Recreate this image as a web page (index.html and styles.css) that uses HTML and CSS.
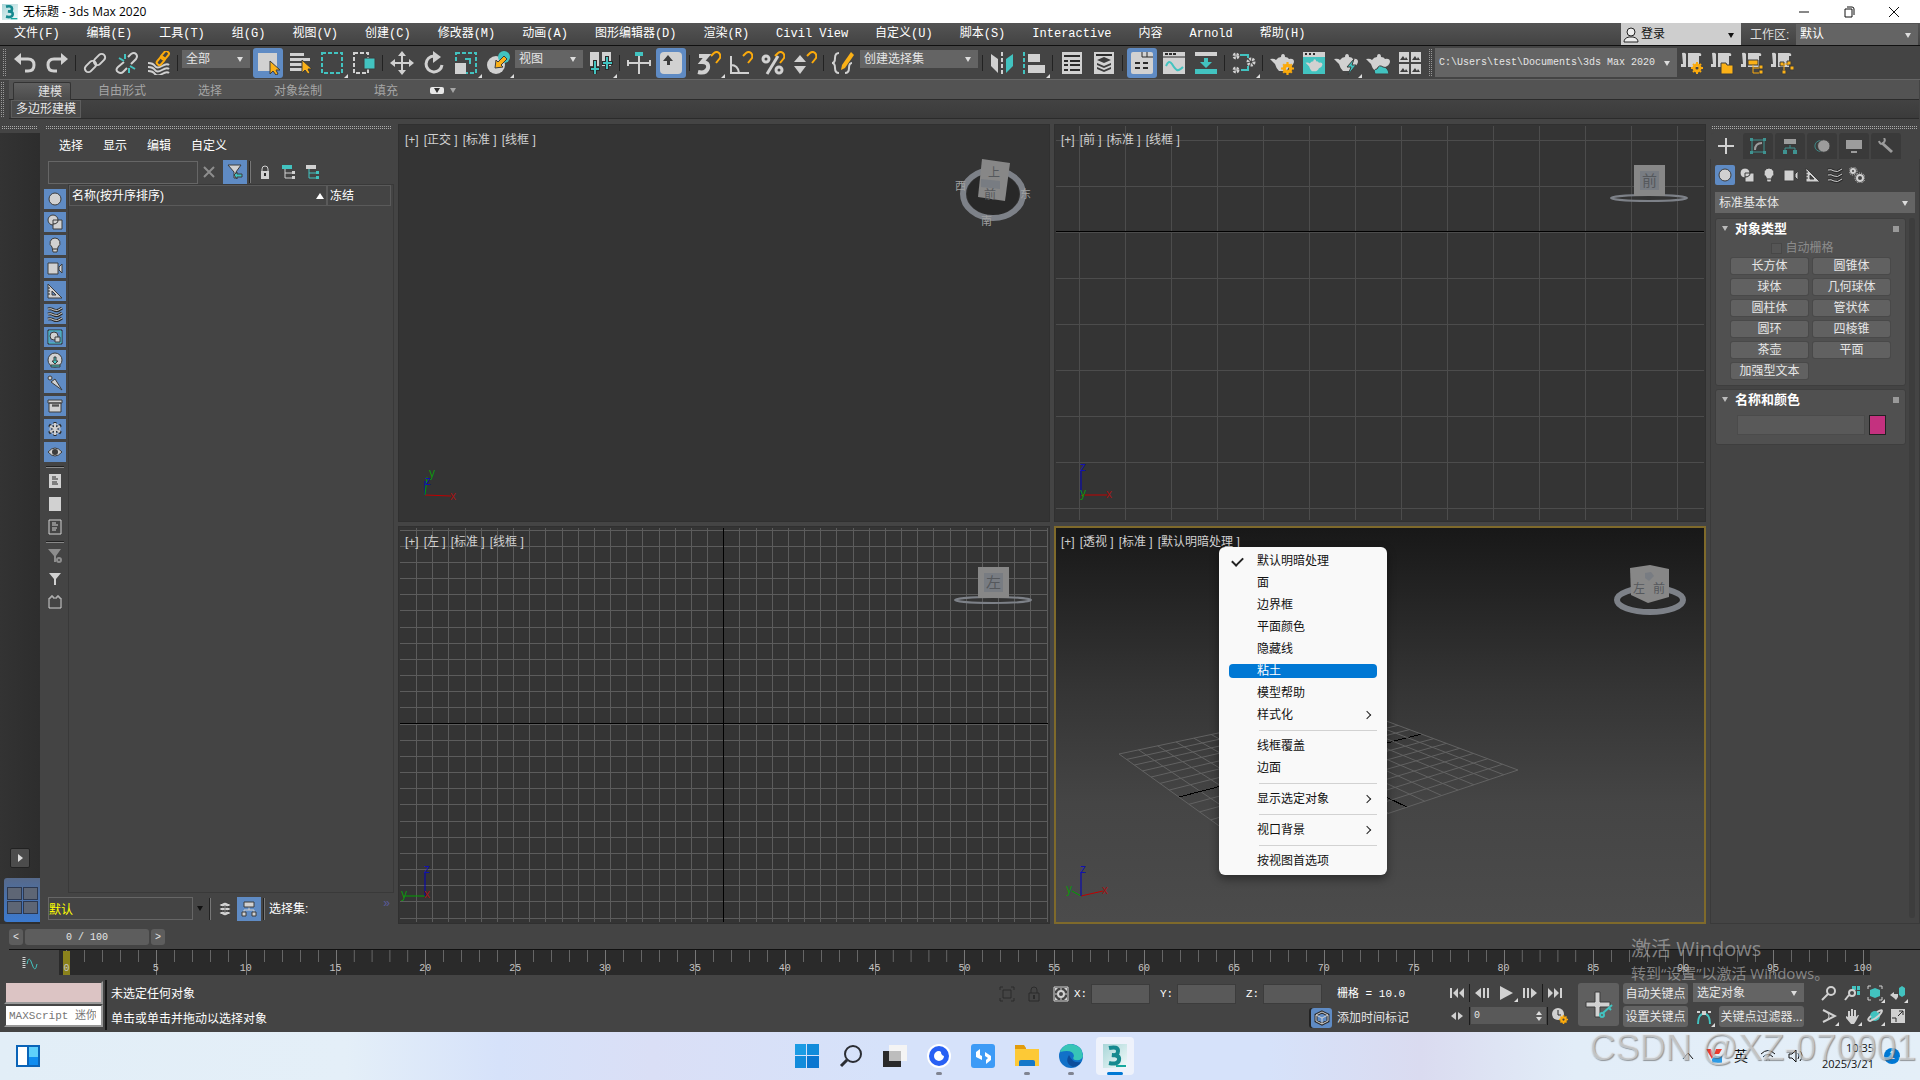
FILE: index.html
```html
<!DOCTYPE html>
<html lang="zh-CN">

<head>
    <meta charset="UTF-8">
    <meta name="viewport" content="width=device-width, initial-scale=1.0">
    <title>无标题 - 3ds Max 2020</title>
    <link rel="stylesheet" href="styles.css">
</head>

<body>
    <!-- icon sprite: g = grey, t = teal, o = orange, d = dark -->
    <svg class="sprite" aria-hidden="true">
        <symbol id="undo" viewBox="0 0 24 24"><path class="lg w3" d="M7 8h8q6 0 6 6t-6 6h-3"/><path class="g" d="M8 2v12L1 8z"/></symbol>
        <symbol id="redo" viewBox="0 0 24 24"><path class="lg w3" d="M17 8H9q-6 0-6 6t6 6h3"/><path class="g" d="M16 2v12l7-6z"/></symbol>
        <symbol id="link" viewBox="0 0 24 24"><g class="lg w2"><rect x="1" y="12" width="13" height="7" rx="3.5" transform="rotate(-45 7.500 15.500)"/><rect x="10" y="5" width="13" height="7" rx="3.500" transform="rotate(-45 16.500 8.500)"/></g></symbol>
        <symbol id="unlink" viewBox="0 0 24 24"><path class="lg w2" d="M9 11l-6 5q-3 3 0 5t5 0l4-4M13 6l3-3q3-2 5 0t0 5l-5 5"/><path class="lt w2" d="M4 7l5 3M10 3v5M20 18l-5-3M14 22v-5"/></symbol>
        <symbol id="bind" viewBox="0 0 24 24"><path class="lg w2" d="M1 12q5 0 7 3t7 0 7-1M1 16q5 0 7 3t7 0 7-1M1 20q5 0 7 3t7 0 7-1"/><g class="lo w2"><rect x="9" y="8" width="9" height="5" rx="2" transform="rotate(-50 13 10)"/><rect x="14" y="2" width="9" height="5" rx="2" transform="rotate(-50 18 5)"/></g></symbol>
        <symbol id="select" viewBox="0 0 24 24"><path class="g" d="M2 2h19v18H2z"/><path class="o s" d="M14 10v13l3-3 3 4 2-1-2-4h4z"/></symbol>
        <symbol id="byname" viewBox="0 0 24 24"><path class="g" d="M2 2h14v3H2zM2 7h20v3H2zM2 12h12v3H2zM2 17h12v3H2z"/><path class="o s" d="M14 9v13l3-3 3 4 2-1-2-4h4z"/></symbol>
        <symbol id="rect" viewBox="0 0 24 24"><path class="lt w2 dash" d="M2 2h20v20H2z"/></symbol>
        <symbol id="window" viewBox="0 0 24 24"><path class="lg w2 dash" d="M2 2h14v20H2z"/><path class="t s" d="M12 7h11v11H12z"/></symbol>
        <symbol id="move" viewBox="0 0 24 24"><path class="g" d="M12 0l4 5h-3v6h6V8l5 4-5 4v-3h-6v6h3l-4 5-4-5h3v-6H5v3l-5-4 5-4v3h6V5H8z"/></symbol>
        <symbol id="rotate" viewBox="0 0 24 24"><path class="lg w3" d="M12 5a8 8 0 1 0 8 9"/><path class="g" d="M11 0l8 6-8 6z"/></symbol>
        <symbol id="scale" viewBox="0 0 24 24"><path class="lt w2 dash" d="M2 2h20v20H2z"/><path class="g" d="M1 12h11v11H1z"/><path class="lt w2" d="M11 8h5v5"/></symbol>
        <symbol id="place" viewBox="0 0 24 24"><circle class="g" cx="10" cy="14" r="9"/><circle class="t" cx="18" cy="6" r="6"/><path class="o s" d="M18 5l3 3-6 6 2 2-8 1 1-8 2 2z"/></symbol>
        <symbol id="pivot" viewBox="0 0 24 24"><path class="g" d="M1 1h9v14H1zM13 1h9v14h-9z"/><path class="ld w4" d="M6 9v14M1 18h10M18 5v14M13 12h11"/><path class="lt w2" d="M6 10v13M2 18h8M18 6v12M14 12h9"/></symbol>
        <symbol id="manip" viewBox="0 0 24 24"><path class="lg w2" d="M1 12h22M12 1v22M1 9v6M23 9v6"/><path class="t" d="M8 1h8v4H8z"/></symbol>
        <symbol id="keymode" viewBox="0 0 24 24"><rect class="g" x="1" y="1" width="22" height="22" rx="4"/><path class="d" d="M9 4l5 6h-3v4H8v-4H4z"/></symbol>
        <symbol id="magnet" viewBox="0 0 24 24"><path class="lo w2" d="M14 5l3-3q3-2 5 0t1 5l-4 5"/></symbol>
        <symbol id="snap" viewBox="0 0 24 24"><path class="lg w4" d="M2 5h8l-5 6q7 0 6 6-2 6-10 4"/><use href="#magnet"/></symbol>
        <symbol id="angle" viewBox="0 0 24 24"><path class="lg w2" d="M2 5v17h18M2 14q7 0 8 8"/><use href="#magnet"/></symbol>
        <symbol id="percent" viewBox="0 0 24 24"><g class="lg w3"><circle cx="5" cy="8" r="3"/><circle cx="18" cy="19" r="3"/><path d="M17 5L6 23"/></g><use href="#magnet"/></symbol>
        <symbol id="spin" viewBox="0 0 24 24"><path class="g" d="M1 11h12L7 4zM1 15h12l-6 8z"/><use href="#magnet"/></symbol>
        <symbol id="braces" viewBox="0 0 24 24"><path class="lg w2" d="M8 2Q4 2 4 7t-3 5q3 0 3 5t4 5M14 22q4 0 4-5t3-5"/><path class="o" d="M20 1l3 3-9 13-4 2 1-5z"/></symbol>
        <symbol id="mirror" viewBox="0 0 24 24"><path class="g" d="M1 3l7 5v14l-7-7z"/><path class="lg w2 dash" d="M12 1v22"/><path class="t" d="M23 3l-7 5v14l7-7z"/></symbol>
        <symbol id="align" viewBox="0 0 24 24"><path class="lt w2 dash" d="M2 1v22"/><path class="g" d="M6 3h12v8H6zM6 14h17v8H6z"/></symbol>
        <symbol id="sheet" viewBox="0 0 24 24"><path class="g" d="M2 1h20v22H2z"/><path class="ld w2" d="M4 5h16M4 10h4M10 10h10M4 14h4M10 14h10M4 19h4M10 19h10"/></symbol>
        <symbol id="layersheet" viewBox="0 0 24 24"><path class="g" d="M2 1h20v22H2z"/><path class="ld w2" d="M4 4h16"/><path class="d" d="M12 6l7 3-7 3-7-3zM5 12l7 3 7-3v2l-7 3-7-3zM5 16l7 3 7-3v2l-7 3-7-3z"/></symbol>
        <symbol id="ribbon" viewBox="0 0 24 24"><rect class="g" x="1" y="1" width="22" height="22" rx="2"/><path class="ld w1" d="M12 1v5h11M17 1v5"/><path class="ld w2" d="M5 12h5M13 12h5M5 17h5M13 17h5"/></symbol>
        <symbol id="curve" viewBox="0 0 24 24"><path class="g" d="M1 1h22v22H1z"/><path class="ld w1" d="M1 6h22"/><path class="ld w2" d="M3 3h3M7 3h3M11 3h3"/><path class="lt w2" d="M4 15q3-7 6-2t5 6 6-3"/></symbol>
        <symbol id="schem" viewBox="0 0 24 24"><path class="g" d="M1 1h22v4H1z"/><path class="t" d="M1 18h22v5H1zM10 7h4v4h4l-6 6-6-6h4z"/></symbol>
        <symbol id="mat" viewBox="0 0 24 24"><path class="lt w2" d="M8 4h8v3M9 19h7v-4"/><g class="lg w3 dash2"><circle cx="4" cy="5" r="2"/><circle cx="4" cy="19" r="2"/><circle cx="19" cy="11" r="3"/></g></symbol>
        <symbol id="pot" viewBox="0 0 24 24"><path class="g" d="M0 8q4-1 6 1 2-3 5-3 0-3 2-3t2 3q3 0 4 2 5-1 5 3-1 4-5 5-1 3-4 4H9q-3-3-4-7z"/></symbol>
        <symbol id="gear" viewBox="0 0 12 12"><circle class="lo w3" cx="6" cy="6" r="3"/><path class="lo w2" d="M6 0v2M6 10v2M0 6h2M10 6h2M2 2l1 1M9 9l1 1M10 2L9 3M2 10l1-1"/></symbol>
        <symbol id="rsetup" viewBox="0 0 24 24"><use href="#pot"/><use href="#gear" x="11" y="11" width="13" height="13"/></symbol>
        <symbol id="rframe" viewBox="0 0 24 24"><path class="g" d="M1 1h22v5H1z"/><path class="t" d="M1 6h22v17H1z"/><path class="ld w2" d="M3 3h2M7 3h2M11 3h2"/><use href="#pot" x="3" y="6" width="18" height="17"/></symbol>
        <symbol id="rbolt" viewBox="0 0 24 24"><use href="#pot"/><path class="t s" d="M20 8l-7 8h4l-3 8 8-10h-4z"/></symbol>
        <symbol id="rcloud" viewBox="0 0 24 24"><use href="#pot"/><path class="t s" d="M9 23q-2-5 2-5 2-5 6-2 5 0 6 7z"/></symbol>
        <symbol id="gallery" viewBox="0 0 24 24"><path class="g" d="M1 1h10v10H1zM13 1h10v10H13zM1 13h10v10H1zM13 13h10v10H13z"/><path class="d" d="M2 9l3-4 2 3 1-2 2 3zM14 9l3-4 2 3 1-2 2 3zM2 21l3-4 2 3 1-2 2 3zM14 21l3-4 2 3 1-2 2 3z"/></symbol>
        <symbol id="scroll" viewBox="0 0 24 24"><path class="g" d="M2 2q3-1 4 1v13H1v-3h2zM8 2h11q3 0 2 3h-2v11H8z"/></symbol>
        <symbol id="sc1" viewBox="0 0 24 24"><use href="#scroll"/><use href="#gear" x="11" y="11" width="12" height="12"/></symbol>
        <symbol id="sc2" viewBox="0 0 24 24"><use href="#scroll"/><path class="o s" d="M11 12h5l1 2h6v9H11z"/></symbol>
        <symbol id="sc3" viewBox="0 0 24 24"><use href="#scroll"/><path class="o s" d="M8 9h10v5H8zM19 14h4v4h-4zM19 19h4v4h-4z"/><path class="lo w1" d="M13 14v8h6M13 17h6"/></symbol>
        <symbol id="sc4" viewBox="0 0 24 24"><use href="#scroll"/><path class="o s" d="M10 11h4v4h-4zM17 10h4v4h-4zM12 19h4v4h-4zM20 15h4v4h-4z"/><path class="lo w1" d="M14 19v-6h5"/></symbol>
        <symbol id="sphere" viewBox="0 0 16 16"><circle class="g s" cx="8" cy="8" r="6"/></symbol>
        <symbol id="shapes" viewBox="0 0 16 16"><circle class="g s" cx="6" cy="6" r="5"/><path class="g s" d="M6 6h9v9H6z"/><path class="ld w1" d="M6 10q5 0 5-4"/></symbol>
        <symbol id="bulb" viewBox="0 0 16 16"><path class="g s" d="M8 1a5 5 0 0 1 3 9l-1 5H6l-1-5a5 5 0 0 1 3-9z"/><path class="ld w1" d="M6 12h4"/></symbol>
        <symbol id="camera" viewBox="0 0 16 16"><path class="g s" d="M1 3h10v11H1zM12 7l3-3v9l-3-3z"/></symbol>
        <symbol id="ruler" viewBox="0 0 16 16"><path class="g s" fill-rule="evenodd" d="M1 1l14 14H1zM5 8v4h4z"/><path class="ld w1" d="M1 5h2M1 8h2M1 11h2"/></symbol>
        <symbol id="waves" viewBox="0 0 16 16"><path class="ld w3" d="M1 3q3-1 6 1t8-2M1 8q3-1 6 1t8-2M1 13q3-1 6 1t8-2"/><path class="lg w1" d="M1 3q3-1 6 1t8-2M1 8q3-1 6 1t8-2M1 13q3-1 6 1t8-2"/></symbol>
        <symbol id="group" viewBox="0 0 16 16"><path class="ld w1" d="M1 1h14v14H1z"/><path class="lt w1" d="M2 2h12v12H2z"/><circle class="g s" cx="7" cy="7" r="4"/><path class="g s" d="M8 8h5v5H8z"/></symbol>
        <symbol id="xref" viewBox="0 0 16 16"><circle class="g s" cx="8" cy="8" r="7"/><path class="t s" d="M7 5h2v4h2l-3 3-3-3h2zM4 13h9v2H4z"/></symbol>
        <symbol id="bone" viewBox="0 0 16 16"><circle class="g s" cx="3" cy="3" r="2"/><path class="g s" d="M4 7l4-3 7 11z"/></symbol>
        <symbol id="box" viewBox="0 0 16 16"><path class="g s" d="M2 5h12v9H2zM1 2h14v3H1z"/><path class="ld w1" d="M5 7h7M5 8h7"/></symbol>
        <symbol id="snow" viewBox="0 0 16 16"><path class="ld w3" d="M8 1v14M2 4l12 8M14 4L2 12"/><path class="lg w2" d="M8 2v12M3 5l10 6M13 5L3 11"/><circle class="lg w1" cx="8" cy="8" r="5"/></symbol>
        <symbol id="eye" viewBox="0 0 16 16"><path class="g s" d="M1 8q7-8 14 0-7 8-14 0z"/><circle class="d" cx="8" cy="8" r="3"/></symbol>
        <symbol id="doc" viewBox="0 0 16 16"><path class="g" d="M2 1h12v14H2z"/><path class="ld w1" d="M5 4h4M5 6h6M5 9h5M5 11h6"/></symbol>
        <symbol id="blank" viewBox="0 0 16 16"><path class="g" d="M2 1h12v14H2z"/></symbol>
        <symbol id="docline" viewBox="0 0 16 16"><path class="lg w1" d="M2 1h12v14H2zM5 4h4M5 6h6M5 9h5M5 11h4"/></symbol>
        <symbol id="funnel" viewBox="0 0 16 16"><path class="g" d="M2 2h12l-5 6v6H7V8z"/></symbol>
        <symbol id="funnelgear" viewBox="0 0 16 16"><path class="m" d="M1 1h13L9 8v6H7V8z"/><circle class="lm w2" cx="12" cy="12" r="2"/></symbol>
        <symbol id="puzzle" viewBox="0 0 16 16"><path class="lg w1" d="M2 4h2V2h2v2h4V2h2v2h2v10H2z"/></symbol>
        <symbol id="filter" viewBox="0 0 16 16"><path class="g s" d="M1 1h13L9 8v6H7V8z"/><path class="t s" d="M7 11l3-3v2h5v3h-5v2z"/></symbol>
        <symbol id="lock" viewBox="0 0 16 16"><path class="lg w1" d="M5 8V5q0-3 3-3t3 3v3"/><path class="g" d="M4 7h8v8H4z"/><path class="ld w2" d="M8 9v3"/></symbol>
        <symbol id="tree1" viewBox="0 0 16 16"><path class="t" d="M1 1h10v4H1z"/><path class="lg w1" d="M4 5v9h7M4 9h7"/><path class="g" d="M11 7h3v3h-3zM11 12h3v3h-3z"/></symbol>
        <symbol id="tree2" viewBox="0 0 16 16"><path class="g" d="M1 1h10v4H1z"/><path class="lt w1" d="M4 5v9h7M4 9h7"/><path class="t" d="M11 7h3v3h-3zM11 12h3v3h-3z"/></symbol>
        <symbol id="layers" viewBox="0 0 16 16"><path class="g s" d="M8 9l7 3-7 3-7-3zM8 5l7 3-7 3-7-3zM8 1l7 3-7 3-7-3z"/></symbol>
        <symbol id="hier" viewBox="0 0 16 16"><path class="lg w1" d="M8 6v3M3 12V9h10v3"/><path class="g s" d="M3 1h10v5H3zM1 11h4v4H1zM11 11h4v4h-4z"/></symbol>
        <symbol id="gears" viewBox="0 0 16 16"><g class="lg w2"><circle cx="4" cy="4" r="2"/><circle cx="11" cy="11" r="3"/></g><circle class="lg w1 dash1" cx="4" cy="4" r="4"/><circle class="lg w1 dash1" cx="11" cy="11" r="5"/></symbol>
        <symbol id="plus" viewBox="0 0 16 16"><path class="lg w2" d="M8 0v16M0 8h16"/></symbol>
        <symbol id="modify" viewBox="0 0 16 16"><path class="lt w1" d="M2 2h12v12H2z"/><path class="t" d="M0 0h3v3H0zM13 0h3v3h-3zM0 13h3v3H0zM13 13h3v3h-3z"/><path class="lg w2" d="M5 12q0-7 7-7"/></symbol>
        <symbol id="hier2" viewBox="0 0 16 16"><path class="g" d="M2 1h12v5H2z"/><path class="lt w1" d="M8 7v3M3 13v-3h10v3"/><path class="t" d="M1 12h4v4H1zM11 12h4v4h-4z"/></symbol>
        <symbol id="motion" viewBox="0 0 18 16"><circle class="lt w1" cx="7" cy="8" r="6"/><circle class="g s" cx="11" cy="8" r="7"/></symbol>
        <symbol id="display" viewBox="0 0 16 16"><path class="g" d="M0 2h16v9H0zM5 13h6v2H5z"/></symbol>
        <symbol id="wrench" viewBox="0 0 16 16"><path class="lg w3" d="M4 5l10 9"/><path class="lg w2" d="M1 3q1 4 4 2t1-5"/></symbol>
        <symbol id="tcurve" viewBox="0 0 16 14"><path class="lg w3 dash1" d="M2 1v12"/><path class="lt w1" d="M5 8q2-10 5 0t5 0"/></symbol>
        <symbol id="isolate" viewBox="0 0 16 16"><path class="ld w1" d="M4 4h8v8H4zM1 4V1h3M12 1h3v3M15 12v3h-3M4 15H1v-3"/></symbol>
        <symbol id="darklock" viewBox="0 0 16 16"><path class="ld w1" d="M5 7V4q0-3 3-3t3 3v3M3 7h10v8H3z"/><path class="ld w2" d="M8 9v4"/></symbol>
        <symbol id="abs" viewBox="0 0 16 16"><path class="lg w1" d="M1 1h14v14H1z"/><circle class="lg w2" cx="8" cy="8" r="3"/><path class="lg w1" d="M8 2v3M8 11v3M2 8h3M11 8h3"/><path class="g" d="M2 2h3L2 5zM14 2v3l-3-3zM2 14v-3l3 3zM14 14h-3l3-3z"/></symbol>
        <symbol id="cube" viewBox="0 0 16 16"><path class="ld w3" d="M8 2l6 3v6l-6 3-6-3V5z"/><path class="lg w1" d="M8 2l6 3v6l-6 3-6-3V5zM2 5l6 3 6-3M8 8v6"/></symbol>
        <symbol id="first" viewBox="0 0 16 12"><path class="g" d="M1 1h2v10H1zM9 1v10L4 6zM15 1v10l-5-5z"/></symbol>
        <symbol id="prev" viewBox="0 0 16 12"><path class="g" d="M7 1v10L1 6zM9 1h2v10H9zM13 1h2v10h-2z"/></symbol>
        <symbol id="play" viewBox="0 0 16 16"><path class="g" d="M2 1v14l13-7z"/></symbol>
        <symbol id="next" viewBox="0 0 16 12"><path class="g" d="M9 1v10l6-5zM1 1h2v10H1zM5 1h2v10H5z"/></symbol>
        <symbol id="last" viewBox="0 0 16 12"><path class="g" d="M13 1h2v10h-2zM1 1v10l5-5zM7 1v10l5-5z"/></symbol>
        <symbol id="keystep" viewBox="0 0 12 10"><path class="g" d="M5 1v8L0 5zM7 1v8l5-4z"/></symbol>
        <symbol id="clock" viewBox="0 0 16 16"><circle class="g" cx="6" cy="6" r="6"/><path class="ld w1" d="M6 2v5h3"/><use href="#gear" x="7" y="7" width="9" height="9"/></symbol>
        <symbol id="bigkey" viewBox="0 0 28 28"><path class="g s" d="M10 1h5v10h10v5H15v10h-5V16H1v-5h9z"/><path class="lt w2" d="M18 22l9-8M24 17l2 2"/><circle class="lt w2" cx="17" cy="24" r="2"/></symbol>
        <symbol id="tangent" viewBox="0 0 16 16"><path class="lt w2" d="M2 15q0-8 4-10M14 15q0-8-4-10"/><path class="g" d="M1 2h3v2H1zM12 2h3v2h-3zM6 2h4v4H6z"/></symbol>
        <symbol id="zoom" viewBox="0 0 16 16"><circle class="lg w2" cx="10" cy="6" r="4"/><path class="lg w2" d="M7 9l-6 6"/></symbol>
        <symbol id="zoomall" viewBox="0 0 16 16"><path class="t" d="M8 1h4v4H8zM13 1h3v4h-3zM13 6h3v4h-3z"/><circle class="lg w2" cx="8" cy="8" r="3"/><path class="lg w2" d="M5 10l-4 5"/></symbol>
        <symbol id="extent" viewBox="0 0 16 16"><path class="lg w1" d="M1 4V1h3M12 1h3v3M15 12v3h-3M4 15H1v-3"/><path class="t" d="M8 3l5 2v6l-5 2-5-2V5z"/></symbol>
        <symbol id="extentall" viewBox="0 0 16 16"><path class="t" d="M9 3l3-2 3 2v7l-3 2-3-2z"/><path class="g" d="M0 10l4-3v2h4v3l-2 3-2-2z"/></symbol>
        <symbol id="fov" viewBox="0 0 16 16"><path class="lg w2" d="M2 2l12 6-12 6"/><path class="lg w1" d="M6 4q4 4 0 8"/></symbol>
        <symbol id="hand" viewBox="0 0 16 16"><path class="g" d="M4 3h2v5h1V1h2v7h1V2h2v7l2-2h1l-3 6-2 3H7L2 10V8l2 1z"/></symbol>
        <symbol id="orbit" viewBox="0 0 16 16"><circle class="t" cx="8" cy="8" r="5"/><path class="lg w2" d="M10 4q7-4 4 1T3 13Q-1 12 4 8"/></symbol>
        <symbol id="maximize" viewBox="0 0 16 16"><path class="g" d="M1 1h14v14H1z"/><path class="ld w1" d="M2 10h4v4M8 8l5-5M9 3h4v4"/></symbol>
        <symbol id="max" viewBox="0 0 24 24"><defs><linearGradient id="maxg" x2="1" y2="1"><stop stop-color="#a9d6d8"/><stop offset="1" stop-color="#f2fafa"/></linearGradient></defs><path fill="url(#maxg)" d="M0 0h24v24H0z"/><path fill="none" stroke="#16898f" stroke-width="4" d="M6 4q9-2 9 3t-6 4q8 0 7 5t-10 3"/><path fill="#16a79f" d="M13 21h10v2H13z"/></symbol>
    </svg>

    <header class="title">
        <svg class="i16"><use href="#max"/></svg>
        <span>无标题 - 3ds Max 2020</span>
        <div class="winbtns">
            <button aria-label="最小化"><svg viewBox="0 0 12 12"><path d="M1 6h10"/></svg></button>
            <button aria-label="还原"><svg viewBox="0 0 12 12"><path d="M2 3h7v8H2zM4 1h5q2 0 2 2v6"/></svg></button>
            <button aria-label="关闭"><svg viewBox="0 0 12 12"><path d="M1 1l10 10M11 1L1 11"/></svg></button>
        </div>
    </header>

    <nav class="menubar">
        <button>文件(F)</button><button>编辑(E)</button><button>工具(T)</button><button>组(G)</button><button>视图(V)</button><button>创建(C)</button><button>修改器(M)</button><button>动画(A)</button><button>图形编辑器(D)</button><button>渲染(R)</button><button>Civil View</button><button>自定义(U)</button><button>脚本(S)</button><button>Interactive</button><button>内容</button><button>Arnold</button><button>帮助(H)</button>
        <button class="login"><svg class="i16" viewBox="0 0 16 16"><circle cx="8" cy="5" r="4"/><path d="M1 15q0-4 5-5h4q5 1 5 5z"/></svg>登录<i class="tri"></i></button>
        <label for="ws">工作区:</label>
        <span class="drop ws"><select id="ws"><option>默认</option></select></span>
    </nav>

    <div class="toolbar">
        <i class="grip"></i>
        <button><svg><use href="#undo"/></svg></button><button><svg><use href="#redo"/></svg></button><hr>
        <button><svg><use href="#link"/></svg></button><button><svg><use href="#unlink"/></svg></button><button><svg><use href="#bind"/></svg></button><hr>
        <span class="drop short"><select aria-label="选择过滤器"><option>全部</option></select></span>
        <button class="on"><svg><use href="#select"/></svg></button><button><svg><use href="#byname"/></svg></button><button class="more"><svg><use href="#rect"/></svg></button><button><svg><use href="#window"/></svg></button><hr>
        <button><svg><use href="#move"/></svg></button><button><svg><use href="#rotate"/></svg></button><button class="more"><svg><use href="#scale"/></svg></button><button class="more"><svg><use href="#place"/></svg></button>
        <span class="drop short"><select aria-label="参考坐标系"><option>视图</option></select></span>
        <button class="more"><svg><use href="#pivot"/></svg></button><hr>
        <button><svg><use href="#manip"/></svg></button><button class="on"><svg><use href="#keymode"/></svg></button><hr>
        <button class="more"><svg><use href="#snap"/></svg></button><button><svg><use href="#angle"/></svg></button><button><svg><use href="#percent"/></svg></button><button><svg><use href="#spin"/></svg></button><hr>
        <button><svg><use href="#braces"/></svg></button>
        <span class="drop sets"><select aria-label="命名选择集"><option>创建选择集</option></select></span><hr>
        <button><svg><use href="#mirror"/></svg></button><button class="more"><svg><use href="#align"/></svg></button><hr>
        <button><svg><use href="#sheet"/></svg></button><button><svg><use href="#layersheet"/></svg></button><hr>
        <button class="on"><svg><use href="#ribbon"/></svg></button><button><svg><use href="#curve"/></svg></button><button><svg><use href="#schem"/></svg></button><hr>
        <button class="more"><svg><use href="#mat"/></svg></button><hr>
        <button><svg><use href="#rsetup"/></svg></button><button><svg><use href="#rframe"/></svg></button><button class="more"><svg><use href="#rbolt"/></svg></button><button><svg><use href="#rcloud"/></svg></button><button><svg><use href="#gallery"/></svg></button>
        <i class="grip"></i>
        <span class="drop path"><select aria-label="项目文件夹"><option>C:\Users\test\Documents\3ds Max 2020</option></select></span>
        <button class="slim"><svg><use href="#sc1"/></svg></button><button class="slim"><svg><use href="#sc2"/></svg></button><button class="slim"><svg><use href="#sc3"/></svg></button><button class="slim"><svg><use href="#sc4"/></svg></button>
    </div>

    <div class="ribbon">
        <i class="grip"></i>
        <div class="ribbon-body">
            <div class="tabs"><button class="active">建模</button><button>自由形式</button><button>选择</button><button>对象绘制</button><button>填充</button><button class="mini"><i class="pill"><i class="tri"></i></i><i class="tri"></i></button></div>
            <div class="subtabs"><button>多边形建模</button></div>
        </div>
    </div>

    <main>
        <aside class="strip">
            <i class="hgrip"></i>
            <div class="strip-body">
                <button class="expand" aria-label="展开"><i></i></button>
                <button class="layout" aria-label="视口布局"><i></i><i></i><i></i><i></i></button>
            </div>
        </aside>

        <section class="explorer">
            <i class="hgrip"></i>
            <nav><button>选择</button><button>显示</button><button>编辑</button><button>自定义</button></nav>
            <div class="search">
                <input type="text" aria-label="查找">
                <button class="clear" aria-label="清除"><svg class="i12" viewBox="0 0 12 12"><path class="lm w2" d="M1 1l10 10M11 1L1 11"/></svg></button>
                <button class="on"><svg class="i16"><use href="#filter"/></svg></button><hr>
                <button><svg class="i16"><use href="#lock"/></svg></button><button><svg class="i16"><use href="#tree1"/></svg></button><button><svg class="i16"><use href="#tree2"/></svg></button>
            </div>
            <div class="list">
                <div class="filters">
                    <button class="on"><svg><use href="#sphere"/></svg></button>
                    <button class="on"><svg><use href="#shapes"/></svg></button>
                    <button class="on"><svg><use href="#bulb"/></svg></button>
                    <button class="on"><svg><use href="#camera"/></svg></button>
                    <button class="on"><svg><use href="#ruler"/></svg></button>
                    <button class="on"><svg><use href="#waves"/></svg></button>
                    <button class="on"><svg><use href="#group"/></svg></button>
                    <button class="on"><svg><use href="#xref"/></svg></button>
                    <button class="on"><svg><use href="#bone"/></svg></button>
                    <button class="on"><svg><use href="#box"/></svg></button>
                    <button class="on"><svg><use href="#snow"/></svg></button>
                    <button class="on"><svg><use href="#eye"/></svg></button>
                    <hr>
                    <button><svg><use href="#doc"/></svg></button>
                    <button><svg><use href="#blank"/></svg></button>
                    <button><svg><use href="#docline"/></svg></button>
                    <hr>
                    <button><svg><use href="#funnelgear"/></svg></button>
                    <button><svg><use href="#funnel"/></svg></button>
                    <button><svg><use href="#puzzle"/></svg></button>
                </div>
                <div class="objects">
                    <table>
                        <thead><tr><th class="name">名称(按升序排序)<i class="up"></i></th><th class="frozen">冻结</th></tr></thead>
                    </table>
                </div>
            </div>
            <div class="sets-row">
                <input type="text" value="默认" aria-label="层资源管理器"><i class="tri"></i><hr>
                <button><svg class="i16"><use href="#layers"/></svg></button><button class="on"><svg class="i16"><use href="#hier"/></svg></button><hr>
                <span>选择集:</span><span class="chev">»</span>
            </div>
        </section>

        <section class="views">
            <div class="view">
                <svg class="scene" viewBox="0 0 652 398">
                    <ellipse class="shade" cx="595" cy="70" rx="26" ry="21"/><ellipse class="ring" cx="595" cy="70" rx="30" ry="24"/>
                    <path class="face" d="M584 35l28 4-5 38-27-4z"/><path class="face2" d="M583 55l19 2v8l-19-2z"/>
                    <text class="cubetext" x="590" y="53">上</text><text class="cubetext" x="586" y="75">前</text>
                    <text class="compass" x="557" y="66">西</text><text class="compass" x="622" y="74">东</text><text class="compass" x="583" y="101">南</text>
                    <path class="ax" d="M27 371l26 1"/><path class="az" d="M27 371v-14"/><path class="ay" d="M27 371l2-18"/>
                    <text class="fx" x="52" y="376">x</text><text class="fy" x="31" y="353">y</text><text class="fz" x="27" y="361">z</text>
                </svg>
                <div class="labels"><button>[+]</button><button>[正交 ]</button><button>[标准 ]</button><button>[线框 ]</button></div>
            </div>
            <div class="view">
                <svg class="scene" viewBox="0 0 652 398">
                    <g id="gridFront"></g>
                    <ellipse class="ring flat" cx="595" cy="74" rx="38" ry="3"/><path class="face" d="M580 41h31v31h-31z"/><path class="face2" d="M586 47h19v19h-19z"/>
                    <text class="cubetext big" x="588" y="62">前</text>
                    <path class="ax" d="M27 371h26"/><path class="az" d="M27 371v-24"/>
                    <text class="fx" x="52" y="374">x</text><text class="fy" x="26" y="373">y</text><text class="fz" x="26" y="347">z</text>
                </svg>
                <div class="labels"><button>[+]</button><button>[前 ]</button><button>[标准 ]</button><button>[线框 ]</button></div>
            </div>
            <div class="view">
                <svg class="scene" viewBox="0 0 652 398">
                    <g id="gridLeft"></g>
                    <ellipse class="ring flat" cx="595" cy="74" rx="38" ry="3"/><path class="face" d="M580 41h31v31h-31z"/><path class="face2" d="M586 47h19v19h-19z"/>
                    <text class="cubetext big" x="588" y="62">左</text>
                    <path class="ay" d="M27 370H6"/><path class="az" d="M27 370v-24"/>
                    <text class="fx" x="26" y="372">x</text><text class="fy" x="3" y="372">y</text><text class="fz" x="26" y="347">z</text>
                </svg>
                <div class="labels"><button>[+]</button><button>[左 ]</button><button>[标准 ]</button><button>[线框 ]</button></div>
            </div>
            <div class="view active">
                <svg class="scene" viewBox="0 0 652 398">
                    <g id="gridPersp"></g>
                    <ellipse class="shade" cx="596" cy="73" rx="28" ry="10"/><ellipse class="ring" cx="596" cy="74" rx="33" ry="12"/>
                    <path class="face" d="M576 42l20-3 19 4v28l-21 6-17-8z"/><path class="face2" d="M591 47l6-1 3 4-5 5-4-3z"/>
                    <text class="cubetext" x="579" y="67">左</text><text class="cubetext" x="599" y="67">前</text>
                    <path class="ax" d="M27 370l22-5"/><path class="ay" d="M27 370l-9-5"/><path class="az" d="M27 370v-24"/>
                    <text class="fx" x="48" y="368">x</text><text class="fy" x="12" y="367">y</text><text class="fz" x="26" y="347">z</text>
                </svg>
                <div class="labels"><button>[+]</button><button>[透视 ]</button><button>[标准 ]</button><button>[默认明暗处理 ]</button></div>
                <ul class="popup">
                    <li><button class="checked">默认明暗处理</button></li>
                    <li><button>面</button></li>
                    <li><button>边界框</button></li>
                    <li><button>平面颜色</button></li>
                    <li><button>隐藏线</button></li>
                    <li><button class="hover">粘土</button></li>
                    <li><button>模型帮助</button></li>
                    <li><button class="sub">样式化</button></li>
                    <li class="line"></li>
                    <li><button>线框覆盖</button></li>
                    <li><button>边面</button></li>
                    <li class="line"></li>
                    <li><button class="sub">显示选定对象</button></li>
                    <li class="line"></li>
                    <li><button class="sub">视口背景</button></li>
                    <li class="line"></li>
                    <li><button>按视图首选项</button></li>
                </ul>
            </div>
        </section>

        <aside class="command">
            <i class="hgrip"></i>
            <div class="cmd-tabs">
                <button class="active"><svg><use href="#plus"/></svg></button><button><svg><use href="#modify"/></svg></button><button><svg><use href="#hier2"/></svg></button><button><svg><use href="#motion"/></svg></button><button><svg><use href="#display"/></svg></button><button><svg><use href="#wrench"/></svg></button>
            </div>
            <div class="cmd-body">
                <div class="cats">
                    <button class="on"><svg><use href="#sphere"/></svg></button><button><svg><use href="#shapes"/></svg></button><button><svg><use href="#bulb"/></svg></button><button><svg><use href="#camera"/></svg></button><button><svg><use href="#ruler"/></svg></button><button><svg><use href="#waves"/></svg></button><button><svg><use href="#gears"/></svg></button>
                </div>
                <span class="drop std"><select aria-label="类别"><option>标准基本体</option></select></span>
                <div class="scroller">
                    <div class="rollouts">
                        <section class="rollout">
                            <h2><i class="tri"></i>对象类型<i class="dots"></i></h2>
                            <label class="auto"><input type="checkbox" disabled>自动栅格</label>
                            <div class="types">
                                <button>长方体</button><button>圆锥体</button>
                                <button>球体</button><button>几何球体</button>
                                <button>圆柱体</button><button>管状体</button>
                                <button>圆环</button><button>四棱锥</button>
                                <button>茶壶</button><button>平面</button>
                                <button>加强型文本</button>
                            </div>
                        </section>
                        <section class="rollout">
                            <h2><i class="tri"></i>名称和颜色<i class="dots"></i></h2>
                            <div class="namecolor"><input type="text" aria-label="名称"><button aria-label="颜色"></button></div>
                        </section>
                    </div>
                    <i class="track"></i>
                </div>
            </div>
        </aside>
    </main>

    <div class="slider"><button>&lt;</button><button class="thumb">0 / 100</button><button>&gt;</button></div>

    <div class="timeline">
        <button class="tc"><svg><use href="#tcurve"/></svg></button>
        <ol class="ruler">
            <li><span class="now">0</span></li><li><span>5</span></li><li><span>10</span></li><li><span>15</span></li><li><span>20</span></li><li><span>25</span></li><li><span>30</span></li><li><span>35</span></li><li><span>40</span></li><li><span>45</span></li><li><span>50</span></li><li><span>55</span></li><li><span>60</span></li><li><span>65</span></li><li><span>70</span></li><li><span>75</span></li><li><span>80</span></li><li><span>85</span></li><li><span>90</span></li><li><span>95</span></li><li class="end"><span>100</span></li>
        </ol>
    </div>

    <footer class="status">
        <div class="script"><input class="pink" type="text" aria-label="宏录制器"><input type="text" aria-label="侦听器" placeholder="MAXScript 迷你侦听器"></div>
        <div class="prompt"><p>未选定任何对象</p><p>单击或单击并拖动以选择对象</p></div>
        <div class="coords">
            <div class="xyz">
                <button><svg><use href="#isolate"/></svg></button><button><svg><use href="#darklock"/></svg></button><button><svg><use href="#abs"/></svg></button>
                <label for="cx">X:</label><input id="cx" type="text"><label for="cy">Y:</label><input id="cy" type="text"><label for="cz">Z:</label><input id="cz" type="text">
                <span class="grid">栅格 = 10.0</span>
            </div>
            <div class="tag"><button class="on"><svg><use href="#cube"/></svg></button><span>添加时间标记</span></div>
        </div>
        <div class="transport">
            <div><button><svg><use href="#first"/></svg></button><hr><button><svg><use href="#prev"/></svg></button><button class="more"><svg class="big"><use href="#play"/></svg></button><button><svg><use href="#next"/></svg></button><hr><button><svg><use href="#last"/></svg></button></div>
            <div><button><svg class="i12"><use href="#keystep"/></svg></button><hr><span class="frame"><input type="text" value="0" aria-label="当前帧"><i class="spinner"></i></span><hr><button><svg class="big"><use href="#clock"/></svg></button></div>
        </div>
        <button class="setkey" aria-label="设置关键点"><svg><use href="#bigkey"/></svg></button>
        <div class="keys"><button>自动关键点</button><button>设置关键点</button></div>
        <div class="keyfilter">
            <span class="drop"><select aria-label="选择集"><option>选定对象</option></select></span>
            <div><button class="more tan"><svg><use href="#tangent"/></svg></button><button class="kf">关键点过滤器...</button></div>
        </div>
        <div class="navs">
            <button><svg><use href="#zoom"/></svg></button><button><svg><use href="#zoomall"/></svg></button><button class="more"><svg><use href="#extent"/></svg></button><button class="more"><svg><use href="#extentall"/></svg></button>
            <button class="more"><svg><use href="#fov"/></svg></button><button class="more"><svg><use href="#hand"/></svg></button><button class="more"><svg><use href="#orbit"/></svg></button><button><svg><use href="#maximize"/></svg></button>
        </div>
    </footer>

    <footer class="taskbar">
        <button class="widget" aria-label="小组件"><svg viewBox="0 0 24 22"><path fill="#0a64b8" d="M0 0h24v22H0z"/><path fill="#fff" d="M2 2h9v18H2z"/><path fill="#5fd0fb" d="M13 2h9v10h-9z"/><path fill="#0f8df0" d="M13 12h9v8h-9z"/></svg></button>
        <div class="apps">
            <button><svg viewBox="0 0 24 24"><path fill="#1b9be4" d="M0 0h11v11H0z"/><path fill="#128bdb" d="M12 0h12v11H12zM0 12h11v12H0z"/><path fill="#0b76d0" d="M12 12h12v12H12z"/></svg></button>
            <button><svg viewBox="0 0 24 24"><g fill="none" stroke="#2b2d33" stroke-width="2"><circle cx="14" cy="10" r="8"/><path stroke-width="3" d="M8 16l-6 6"/></g></svg></button>
            <button><svg viewBox="0 0 24 24"><path fill="#2a2a2a" d="M0 7h18v16H0z"/><path fill="#f4f4f4" d="M6 1h18v16H6z"/><path fill="#bdbdbd" d="M6 7h12v10H6z"/></svg></button>
            <button class="run"><svg viewBox="0 0 24 24"><circle cx="12" cy="12" r="12" fill="#fff"/><circle cx="12" cy="12" r="10" fill="#2860f4"/><path fill="#fff" d="M17 12a5 5 0 1 1-5-5q1 0 2 1 0 3 3 4z"/></svg></button>
            <button><svg viewBox="0 0 24 24"><rect width="24" height="24" rx="3" fill="#3d9bf6"/><path fill="#fff" d="M9 5L5 8v5l6 3v-4l-2-1zM14 8l6 4v4l-5 4v-4l2-2-3-2z"/></svg></button>
            <button class="run"><svg viewBox="0 0 24 24"><path fill="#e29c0c" d="M0 1h9l2 3v4H0z"/><path fill="#fdc936" d="M0 5h24v17H0z"/><path fill="#1477c9" d="M4 22v-4q0-2 2-2h12q2 0 2 2v4z"/></svg></button>
            <button class="run"><svg viewBox="0 0 24 24"><circle cx="12" cy="12" r="12" fill="#1171c8"/><path fill="#37c5b7" d="M1 8Q4 0 12 0q11 1 12 12-1 5-8 4-3-1-1-4Q14 5 1 8z"/><path fill="#0d4e9c" d="M10 11q-5 8 4 12 6-1 8-5-8 2-12-7z"/></svg></button>
            <button class="run active"><svg viewBox="0 0 24 24"><use href="#max"/></svg></button>
        </div>
        <div class="tray">
            <svg class="i12" viewBox="0 0 12 12"><path d="M1 9l5-6 5 6"/></svg>
            <svg class="i16 vv" viewBox="0 0 16 16"><path fill="#ea3b2e" d="M0 1h5l3 6 2-6h6l-3 5H8l-2 5z"/><path fill="#2c9be6" d="M6 11l3-3h7v7H6z"/></svg>
            <span class="ime">英</span>
            <svg class="i16" viewBox="0 0 16 16"><path d="M1 6q7-7 14 0M3 9q5-5 10 0M6 12q2-2 4 0"/></svg>
            <svg class="i16" viewBox="0 0 16 16"><path d="M1 6h3l4-4v12l-4-4H1zM10 5q2 3 0 6M12 3q4 5 0 10"/></svg>
            <time>10:35<br>2025/3/21</time>
            <b>1</b>
        </div>
    </footer>

    <div class="activate"><p>激活 Windows</p><p class="small">转到“设置”以激活 Windows。</p></div>
    <div class="mark">CSDN @XZ-070001</div>
    <script src="scene.js"></script>
</body>

</html>
```

FILE: styles.css
```css
* {
    box-sizing: border-box;
}

body {
    margin: 0;
    height: 100vh;
    display: flex;
    flex-direction: column;
    overflow: hidden;
    font: 12px/16px "Liberation Sans", "Noto Sans CJK SC", sans-serif;
    color: #e6e6e6;
    background-color: #444;
}

button,
input,
select {
    font: inherit;
    color: inherit;
    margin: 0;
    padding: 0;
    border: none;
    border-radius: 0;
    background: none;
    outline: none;
    appearance: none;
}

button {
    display: flex;
    align-items: center;
    justify-content: center;
    white-space: nowrap;
    flex: none;
}

p,
ul,
ol,
h2 {
    margin: 0;
    padding: 0;
    list-style: none;
}

i {
    font-style: normal;
}

svg {
    display: block;
    flex: none;
}

.sprite {
    position: absolute;
    width: 0;
    height: 0;
}

/* icon paint */
.g { fill: #d1d1d1; }
.t { fill: #42c3c0; }
.o { fill: #fbb117; }
.d { fill: #3c3c3c; }
.m { fill: #8d8d8d; }
.s { stroke: #3c3c3c; stroke-width: 1; }
.lg, .lt, .lo, .ld, .lm { fill: none; }
.lg { stroke: #d1d1d1; }
.lt { stroke: #42c3c0; }
.lo { stroke: #fbaa0c; }
.ld { stroke: #2b2b2b; }
.lm { stroke: #8d8d8d; }
.w1 { stroke-width: 1; }
.w2 { stroke-width: 2; }
.w3 { stroke-width: 3; }
.w4 { stroke-width: 4; }
.dash { stroke-dasharray: 4 2; }
.dash1 { stroke-dasharray: 1 1; }
.dash2 { stroke-dasharray: 2 1; }

.i12 { width: 12px; height: 12px; }
.i16 { width: 16px; height: 16px; }

.on {
    background-color: #5f8bc4;
}

.tri {
    flex: none;
    border: 3px solid transparent;
    border-top: 5px solid currentColor;
    border-bottom: 0;
}

.grip {
    flex: none;
    width: 3px;
    align-self: stretch;
    margin: 3px 3px;
    background: linear-gradient(90deg, transparent 1px, #444 1px 2px, transparent 2px), repeating-linear-gradient(#999 0 1px, transparent 1px 2px);
}

.hgrip {
    display: block;
    flex: none;
    height: 3px;
    margin: 2px 2px 4px;
    background: linear-gradient(transparent 1px, #444 1px 2px, transparent 2px), repeating-linear-gradient(90deg, #aaa 0 1px, transparent 1px 2px);
}

/* corner flyout mark */
.more {
    position: relative;
}

.more::after {
    content: "";
    position: absolute;
    right: 0;
    bottom: 0;
    border: 2px solid #ddd;
    border-top-color: transparent;
    border-left-color: transparent;
}

.drop {
    position: relative;
    flex: none;
    display: block;
}

.drop select {
    display: block;
    width: 100%;
    height: 100%;
    padding: 0 18px 0 4px;
    background-color: #646464;
}

.drop::after {
    content: "";
    position: absolute;
    top: 50%;
    right: 7px;
    margin-top: -2px;
    border: 3px solid transparent;
    border-top: 5px solid #ddd;
    border-bottom: 0;
}

/* title and menu */
.title {
    flex: none;
    display: flex;
    align-items: center;
    gap: 5px;
    height: 23px;
    padding: 0 4px 0 2px;
    color: #000;
    background-color: #fff;
    font-family: "Open Sans", "Noto Sans CJK SC", sans-serif;
}

.winbtns {
    display: flex;
    margin-left: auto;
}

.winbtns button {
    width: 45px;
    height: 22px;
}

.winbtns svg {
    width: 12px;
    height: 12px;
    fill: none;
    stroke: #111;
}

.menubar {
    flex: none;
    display: flex;
    align-items: stretch;
    height: 23px;
    padding-left: 1px;
    border-bottom: 1px solid #111;
    background: linear-gradient(#545454, #434343);
    font-family: "Liberation Mono", "Noto Sans CJK SC", monospace;
    color: #fff;
}

.menubar > button {
    padding: 0 14px 1px 13px;
}

.menubar .login {
    width: 120px;
    height: 22px;
    margin-left: auto;
    padding: 2px 7px 0 2px;
    gap: 2px;
    justify-content: flex-start;
    color: #111;
    background-color: #cecece;
}

.login svg {
    fill: #eee;
    stroke: #222;
}

.login .tri {
    margin-left: auto;
}

.menubar label {
    padding: 4px 4px 0 9px;
    font-family: "Liberation Sans", "Noto Sans CJK SC", sans-serif;
    width: 55px;
    color: #ddd;
}

.drop.ws {
    width: 122px;
    margin: 1px 2px 0 0;
}

/* main toolbar */
.toolbar {
    flex: none;
    display: flex;
    align-items: center;
    height: 34px;
    border-bottom: 1px solid #666;
}

.toolbar button {
    width: 32px;
    height: 30px;
}

.toolbar button.on {
    width: 30px;
    margin: 0 1px;
    border-radius: 3px;
}

.toolbar button.slim {
    width: 30px;
}

.toolbar svg {
    width: 24px;
    height: 24px;
}

.toolbar hr {
    flex: none;
    width: 1px;
    height: 16px;
    margin: 0 3px 0 2px;
    border: none;
    background-color: #222;
}

.toolbar .drop {
    height: 18px;
    margin: -8px 2px 0 1px;
}

.toolbar .short { width: 68px; }
.toolbar .sets { width: 118px; }

.toolbar .drop.path {
    width: 242px;
    height: 29px;
    margin: 0;
    font: 10px/16px "Liberation Mono", monospace;
}

/* ribbon */
.ribbon {
    flex: none;
    display: flex;
    height: 44px;
}

.ribbon .grip {
    margin: 2px 3px 6px 1px;
}

.ribbon-body {
    flex: 1;
    margin: 0 1px 5px 2px;
    background: linear-gradient(#4b4b4b, #3b3b3b);
    border-bottom: 1px solid #2b2b2b;
}

.tabs {
    display: flex;
    height: 20px;
    background-color: #535353;
    border-bottom: 1px solid #2b2b2b;
    color: #a5a5a5;
}

.tabs button {
    height: 20px;
    padding-top: 1px;
    margin-right: 52px;
}

.tabs .active {
    width: 58px;
    height: 18px;
    margin: 2px 27px 0 4px;
    padding-left: 16px;
    border: 1px solid #333;
    border-bottom: none;
    border-radius: 2px 2px 0 0;
    color: #e0e0e0;
    background: linear-gradient(#606060, #4b4b4b);
}

.tabs button:nth-child(5) { margin-right: 32px; }

.tabs .mini {
    gap: 6px;
}

.pill {
    display: flex;
    padding: 1px 4px;
    border-radius: 2px;
    background-color: #e8e8e8;
    color: #333;
}

.subtabs button {
    width: 70px;
    height: 18px;
    margin-left: 2px;
    border: 1px solid #5d5d5d;
    background-color: #4a4a4a;
}

/* middle row */
main {
    flex: 1;
    min-height: 0;
    display: flex;
}

.strip {
    flex: none;
    width: 40px;
    display: flex;
    flex-direction: column;
}

.strip-body {
    flex: 1;
    display: flex;
    flex-direction: column;
    justify-content: flex-end;
    background: linear-gradient(90deg, #333, #2d2d2d);
    padding-bottom: 2px;
}

.expand {
    width: 20px;
    height: 20px;
    margin: 0 0 10px 10px;
    border: 1px solid #222;
    border-radius: 2px;
    background-color: #4c4c4c;
}

.expand i {
    border: 4px solid transparent;
    border-left: 5px solid #ddd;
    border-right: 0;
}

.layout {
    display: grid;
    grid-template-columns: 15px 15px;
    grid-template-rows: 13px 13px;
    gap: 1px;
    width: 36px;
    height: 44px;
    margin-left: 4px;
    border-radius: 3px 0 0 3px;
    background: linear-gradient(#56698a, #3b7ad0);
    align-content: center;
}

.layout i {
    width: 15px;
    height: 13px;
    border: 1px solid #2c3850;
    background-color: #5e6675;
}

/* scene explorer */
.explorer {
    flex: none;
    width: 354px;
    display: flex;
    flex-direction: column;
    padding-left: 4px;
    color: #fff;
}

.explorer nav {
    display: flex;
    gap: 20px;
    padding: 5px 15px 6px;
}

.explorer input {
    border: 1px solid #666;
}

.explorer .on {
    width: 24px;
    height: 24px;
}

.search {
    display: flex;
    align-items: center;
    height: 24px;
    padding-left: 4px;
}

.search input {
    width: 150px;
    height: 23px;
}

.search .clear {
    width: 22px;
    margin-right: 3px;
}

.search hr,
.sets-row hr {
    flex: none;
    width: 2px;
    height: 22px;
    margin: 0 2px;
    border: 1px solid #777;
    border-left-color: #222;
    border-width: 0 1px;
}

.search button:not(.clear, .on) {
    width: 24px;
}

.list {
    flex: 1;
    min-height: 0;
    display: flex;
    gap: 2px;
}

.filters {
    flex: none;
    display: flex;
    flex-direction: column;
    gap: 3px;
    padding-top: 5px;
}

.filters button,
.filters button.on {
    width: 22px;
    height: 20px;
}

.filters svg {
    width: 16px;
    height: 16px;
}

.filters hr {
    width: 18px;
    height: 2px;
    margin: 1px auto 0;
    border: none;
    border-top: 1px solid #222;
    border-bottom: 1px solid #888;
}

.objects {
    flex: 1;
    padding-right: 2px;
    border: 1px solid #393939;
}

.objects table {
    width: 100%;
    border-spacing: 0;
    table-layout: fixed;
}

.objects th {
    height: 21px;
    padding: 0 2px;
    border: 1px solid #5a5a5a;
    font-weight: normal;
    text-align: left;
}

.frozen {
    width: 64px;
}

.up {
    float: right;
    margin: 5px 0;
    border: 4px solid transparent;
    border-bottom: 6px solid #fff;
    border-top: 0;
}

.sets-row {
    display: flex;
    align-items: center;
    height: 31px;
    padding-left: 4px;
}

.sets-row input {
    width: 145px;
    height: 23px;
    margin-right: 4px;
    color: #ff0;
}

.sets-row .tri {
    margin-right: 4px;
    color: #111;
}

.sets-row button {
    width: 24px;
}

.sets-row span:not(.chev) {
    padding-left: 2px;
}

.chev {
    margin-left: auto;
    padding: 0 4px 12px;
    color: #5a5a9a;
}

/* viewports */
.views {
    flex: 1;
    display: grid;
    grid-template-columns: 1fr 1fr;
    grid-template-rows: 1fr 1fr;
    gap: 4px;
    min-width: 0;
    margin: 0 4px;
}

.view {
    position: relative;
    background-color: #343434;
    border: 1px solid #303030;
}

.view.active {
    border: 2px solid #7f6a2b;
    background: linear-gradient(#181818, #343434 40%, #454545 70%, #4b4b4b);
}

.scene {
    position: absolute;
    inset: -1px;
    width: calc(100% + 2px);
    height: calc(100% + 2px);
}

.active .scene {
    inset: -2px;
    width: calc(100% + 4px);
    height: calc(100% + 4px);
}

.labels {
    position: absolute;
    top: 7px;
    left: 6px;
    display: flex;
    gap: 5px;
    color: #d0d0d0;
}

.active .labels {
    top: 6px;
    left: 5px;
}

.line-front { stroke: #4c4c4c; shape-rendering: crispEdges; }
.line-left { stroke: #5c5c5c; shape-rendering: crispEdges; }
.line-persp { stroke: #626262; }
.line-axis { stroke: #000; shape-rendering: crispEdges; }
.ax { stroke: #c00000; }
.ay { stroke: #00a000; }
.az { stroke: #0000c0; }
.fx { fill: #a01515; }
.fy { fill: #109010; }
.fz { fill: #1010b0; }

.ring {
    fill: none;
    stroke: #7d8188;
    stroke-width: 6;
}

.ring.flat {
    stroke-width: 2;
}

.shade { fill: #282828; }
.face { fill: #878787; }
.face2 { fill: #787c82; }

.cubetext {
    font-size: 12px;
    fill: #55585c;
}

.cubetext.big {
    font-size: 15px;
}

.compass {
    font-size: 11px;
    fill: #a0a0a0;
}

.popup {
    position: absolute;
    top: 19px;
    left: 163px;
    width: 168px;
    padding: 3px 10px;
    border-radius: 6px;
    color: #111;
    background-color: #f9f9f9;
    box-shadow: 0 4px 10px rgba(0, 0, 0, 0.4);
}

.popup button {
    position: relative;
    width: 100%;
    height: 14px;
    margin: 4px 0;
    padding-left: 28px;
    justify-content: flex-start;
    border-radius: 4px;
}

.popup li {
    display: flow-root;
}

.popup .hover {
    color: #fff;
    background-color: #0078d4;
}

.popup .line {
    height: 1px;
    margin: 4px 0 4px 30px;
    background-color: #d2d2d2;
}

.popup .checked::before {
    content: "";
    position: absolute;
    left: 3px;
    top: 3px;
    width: 9px;
    height: 5px;
    border: 2px solid #222;
    border-width: 0 0 2px 2px;
    transform: rotate(-45deg);
}

.popup .sub::after {
    content: "";
    width: 5px;
    height: 5px;
    margin: 0 7px 0 auto;
    border: 1px solid #222;
    border-width: 1px 1px 0 0;
    transform: rotate(45deg);
}

/* command panel */
.command {
    flex: none;
    width: 210px;
    display: flex;
    flex-direction: column;
}

.cmd-tabs {
    display: flex;
    gap: 2px;
    padding-left: 1px;
}

.cmd-tabs button {
    width: 30px;
    height: 26px;
    border-radius: 3px 3px 0 0;
    background-color: #3a3a3a;
}

.cmd-tabs .active {
    background-color: #444;
}

.cmd-tabs svg,
.cats svg {
    width: 16px;
    height: 16px;
}

.cmd-tabs button:not(.active) svg {
    opacity: 0.65;
}

.cmd-body {
    flex: 1;
    min-height: 0;
    display: flex;
    flex-direction: column;
    padding: 6px 4px 5px;
    border: 1px solid #3a3a3a;
    border-top: none;
}

.cats {
    display: flex;
    gap: 2px;
    margin-bottom: 7px;
}

.cats button {
    width: 20px;
    height: 20px;
    border-radius: 2px;
}

.drop.std {
    height: 21px;
    margin-bottom: 5px;
}

.scroller {
    flex: 1;
    display: flex;
    gap: 3px;
}

.track {
    flex: none;
    width: 6px;
    border-radius: 3px;
    background-color: #3d3d3d;
}

.rollouts {
    flex: 1;
    min-width: 0;
}

.rollout {
    margin-bottom: 3px;
    padding: 0 15px 6px;
    border: 1px solid #3e3e3e;
    border-radius: 3px;
    background-color: #505050;
}

.rollout h2 {
    display: flex;
    align-items: center;
    height: 19px;
    margin: 0 -9px;
    font-size: 13px;
    color: #fff;
}

.rollout h2 .tri {
    margin-right: 7px;
    color: #bbb;
}

.dots {
    width: 6px;
    height: 6px;
    margin-left: auto;
    background: radial-gradient(#999 1px, transparent 1px) 0 0 / 2px 2px;
}

.auto {
    display: flex;
    align-items: center;
    justify-content: center;
    gap: 3px;
    height: 20px;
    padding-right: 16px;
    color: #8c8c8c;
}

.auto input {
    width: 11px;
    height: 11px;
    border: 1px solid #474747;
    background-color: #555;
}

.types {
    display: grid;
    grid-template-columns: 1fr 1fr;
    gap: 5px;
}

.types button {
    height: 16px;
    border-radius: 2px;
    background-color: #616161;
    box-shadow: 0 0 0 1px #494949;
}

.namecolor {
    display: flex;
    gap: 4px;
    padding: 6px 4px 3px 6px;
}

.namecolor input {
    flex: 1;
    min-width: 0;
    height: 20px;
    border: 1px solid #4b4b4b;
    background-color: #595959;
}

.namecolor button {
    width: 17px;
    height: 20px;
    border: 1px solid #222;
    background-color: #c4317f;
}

/* time slider */
.slider {
    flex: none;
    display: flex;
    gap: 2px;
    height: 25px;
    padding: 5px 9px 4px;
    font: 10px/16px "Liberation Mono", monospace;
}

.slider button {
    width: 14px;
    padding-top: 1px;
    border-radius: 3px;
    background-color: #5d5d5d;
}

.slider .thumb {
    width: 124px;
}

.timeline {
    flex: none;
    display: flex;
    height: 27px;
    margin-left: 9px;
    border-top: 1px solid #111;
}

.timeline .tc {
    width: 50px;
    padding-right: 8px;
}

.tc svg {
    width: 16px;
    height: 14px;
}

.ruler {
    flex: 1;
    display: flex;
    margin: 0 50px 1px 0;
    padding: 0 6px 0 7px;
    background-color: #2a2a2a;
    font: 10px/12px "Liberation Mono", monospace;
    color: #c4c4c4;
}

.ruler li {
    flex: 1;
    display: flex;
    align-items: flex-end;
    background: linear-gradient(#777, #777) 0 0 / 1px 100% no-repeat, linear-gradient(90deg, #666 1px, transparent 1px) 0 0 / 20% 12px repeat-x;
}

.ruler .end {
    flex: none;
    width: 1px;
}

.ruler span {
    flex: none;
    width: 24px;
    margin-left: -12px;
    text-align: center;
}

.ruler .now {
    width: 7px;
    height: 24px;
    margin-left: -3px;
    padding-top: 12px;
    background-color: #8a821c;
}

/* status bar */
.status {
    flex: none;
    display: flex;
    height: 56px;
    padding-top: 4px;
}

.status svg {
    width: 16px;
    height: 16px;
}

.script {
    width: 103px;
    padding: 1px 0 0 4px;
}

.script input {
    display: block;
    width: 99px;
    height: 23px;
    border: 2px inset #999;
    padding: 0 5px 0 3px;
    background-color: #fff;
    font: 11px/16px "Liberation Mono", "Noto Sans CJK SC", monospace;
    color: #777;
}

.script input.pink {
    background-color: #dcc4c4;
}

.prompt {
    margin: 0 auto 2px 2px;
    padding: 6px 0 0 4px;
    border-left: 2px solid #181818;
    color: #fff;
}

.prompt p {
    margin-bottom: 9px;
}

.coords {
    width: 449px;
    margin-right: 3px;
}

.xyz,
.tag {
    display: flex;
    align-items: center;
    height: 27px;
}

.xyz button {
    width: 27px;
}

.xyz label {
    width: 17px;
    font: 11px/16px "Liberation Mono", monospace;
    color: #fff;
}

.xyz input {
    width: 59px;
    height: 20px;
    margin-right: 10px;
    border: 1px solid #3c3c3c;
    background-color: #595959;
}

.xyz .grid {
    margin-left: 5px;
    font-family: "Liberation Mono", "Noto Sans CJK SC", monospace;
    font-size: 11px;
    color: #fff;
}

.tag {
    height: 22px;
    gap: 5px;
    padding-left: 318px;
}

.tag button {
    width: 21px;
    height: 20px;
    border-radius: 3px;
    box-shadow: -2px 0 0 #222;
}

.transport {
    width: 127px;
}

.transport > div {
    display: flex;
    align-items: center;
    height: 26px;
}

.transport > div + div {
    height: 19px;
}

.transport button {
    width: 24px;
    height: 18px;
}

.transport svg {
    height: 12px;
}

.transport svg.big {
    height: 16px;
}

.transport svg.i12 {
    height: 10px;
}

.transport hr {
    flex: none;
    width: 1px;
    height: 18px;
    margin: 0;
    border: none;
    background-color: #1b1b1b;
}

.frame {
    display: flex;
    flex: 1;
    min-width: 0;
    align-items: center;
    height: 17px;
    padding-right: 4px;
    margin: 0 1px;
    background-color: #595959;
}

.frame input {
    flex: 1;
    min-width: 0;
    padding-left: 3px;
    font: 10px/16px "Liberation Mono", monospace;
}

.spinner::before,
.spinner::after {
    content: "";
    display: block;
    border: 3px solid transparent;
    border-top: 0;
    border-bottom: 4px solid #ddd;
}

.spinner::after {
    margin-top: 2px;
    border-top: 4px solid #ddd;
    border-bottom: 0;
}

.setkey {
    width: 41px;
    height: 43px;
    margin: 3px 4px 0 6px;
    border-radius: 3px;
    background-color: #5f5f5f;
}

.status .setkey svg {
    width: 28px;
    height: 28px;
}

.keys {
    display: flex;
    flex-direction: column;
    gap: 2px;
    padding-top: 3px;
    margin-right: 5px;
}

.keys button,
.kf {
    width: 65px;
    height: 21px;
    border-radius: 3px;
    background-color: #636363;
}

.keyfilter {
    width: 111px;
    padding-top: 3px;
}

.keyfilter .drop {
    height: 19px;
    margin-bottom: 4px;
}

.keyfilter > div {
    display: flex;
    gap: 4px;
}

.tan {
    width: 22px;
}

.kf {
    flex: 1;
    min-width: 0;
    overflow: hidden;
}

.navs {
    display: grid;
    grid-template-columns: repeat(4, 20px);
    grid-template-rows: 20px 20px;
    gap: 3px;
    padding: 3px 12px 0 15px;
}

/* windows taskbar */
.taskbar {
    flex: none;
    position: relative;
    display: flex;
    align-items: center;
    justify-content: center;
    height: 48px;
    background: linear-gradient(90deg, #e2eef7 0, #e4eff8 18%, #d6e2fa 26%, #dadff6 34%, #d6e2fa 46%, #d6e2fa 66%, #dadbf0 74%, #e2edf8 82%, #e4eff8);
    color: #111;
}

.widget {
    position: absolute;
    left: 16px;
}

.widget svg {
    width: 24px;
    height: 22px;
}

.apps {
    display: flex;
    gap: 6px;
    padding-left: 1px;
}

.apps button {
    position: relative;
    width: 38px;
    height: 38px;
    border-radius: 4px;
}

.apps svg {
    width: 24px;
    height: 24px;
}

.apps .active {
    background-color: #eef2fb;
}

.run::after {
    content: "";
    position: absolute;
    bottom: 0;
    width: 6px;
    height: 3px;
    border-radius: 2px;
    background-color: #808491;
}

.run.active::after {
    width: 16px;
    background-color: #0078d4;
}

.tray {
    position: absolute;
    right: 20px;
    display: flex;
    align-items: center;
    gap: 12px;
}

.tray svg:not(.vv) {
    fill: none;
    stroke: #111;
}

.ime {
    font-size: 14px;
}

.tray time {
    font: 11px/16px "Open Sans", sans-serif;
    text-align: right;
    width: 58px;
    white-space: nowrap;
}

.tray b {
    width: 16px;
    height: 16px;
    margin-left: -2px;
    border-radius: 50%;
    font-size: 10px;
    font-weight: normal;
    text-align: center;
    color: #fff;
    background-color: #0078d4;
}

/* overlays */
.activate {
    position: absolute;
    right: 90px;
    bottom: 96px;
    width: 199px;
    font-family: "Open Sans", "Noto Sans CJK SC", sans-serif;
    font-size: 20px;
    line-height: 26px;
    white-space: nowrap;
    color: rgba(190, 190, 190, 0.6);
    pointer-events: none;
}

.activate .small {
    font-size: 15px;
    line-height: 22px;
}

.mark {
    position: absolute;
    right: 4px;
    bottom: 12px;
    font-size: 36px;
    line-height: 40px;
    color: rgba(235, 235, 235, 0.55);
    text-shadow: 1px 1px 1px rgba(90, 90, 90, 0.6);
    pointer-events: none;
}
```

FILE: scene.js
```javascript
function line(parent, a, b, cls) {
    let el = document.createElementNS('http://www.w3.org/2000/svg', 'line');
    el.setAttribute('x1', a[0]);
    el.setAttribute('y1', a[1]);
    el.setAttribute('x2', b[0]);
    el.setAttribute('y2', b[1]);
    el.setAttribute('class', cls);
    document.getElementById(parent).appendChild(el);
}

function flatGrid(parent, step, x0, y0, cls, axisX, axisY) {
    for (let x = x0; x < 650; x += step)
        line(parent, [x, 2], [x, 396], cls);
    for (let y = y0; y < 396; y += step)
        line(parent, [2, y], [650, y], cls);
    if (axisX)
        line(parent, [axisX, 2], [axisX, 396], 'line-axis');
    if (axisY)
        line(parent, [2, axisY], [650, axisY], 'line-axis');
}

// Projects the unit square onto the quad p00, p10, p11, p01.
function projector(p00, p10, p11, p01) {
    let dx1 = p10[0] - p11[0], dx2 = p01[0] - p11[0], dx3 = p00[0] - p10[0] + p11[0] - p01[0];
    let dy1 = p10[1] - p11[1], dy2 = p01[1] - p11[1], dy3 = p00[1] - p10[1] + p11[1] - p01[1];
    let det = dx1 * dy2 - dx2 * dy1;
    let g = (dx3 * dy2 - dx2 * dy3) / det;
    let h = (dx1 * dy3 - dx3 * dy1) / det;

    return function (u, v) {
        let w = g * u + h * v + 1;
        return [0, 1].map(i =>
            ((p10[i] - p00[i] + g * p10[i]) * u + (p01[i] - p00[i] + h * p01[i]) * v + p00[i]) / w);
    };
}

flatGrid('gridFront', 46, 25, 16, 'line-front', 0, 107);
flatGrid('gridLeft', 16.17, 18.5, 4, 'line-left', 325.5, 197.5);

let project = projector([65, 228], [292, 180], [464, 244], [207, 330]);

for (let i = 0; i <= 14; i++) {
    let cls = i === 7 ? 'line-axis' : 'line-persp';
    line('gridPersp', project(i / 14, 0), project(i / 14, 1), cls);
    line('gridPersp', project(0, i / 14), project(1, i / 14), cls);
}
```
